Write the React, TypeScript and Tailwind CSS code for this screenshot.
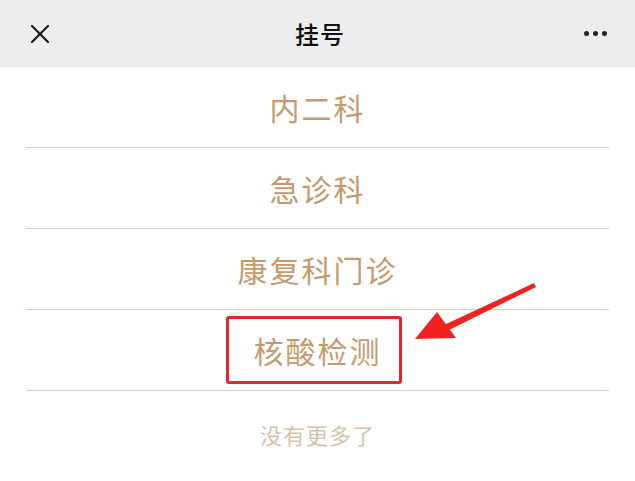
import { X } from "lucide-react";

const departments = ["内二科", "急诊科", "康复科门诊", "核酸检测"];

export default function App() {
  return (
    <div
      className="relative w-[635px] h-[481px] bg-white overflow-hidden"
      style={{ fontFamily: '"Noto Sans CJK SC", "Noto Sans", sans-serif' }}
    >
      <header className="h-[67px] bg-[#ededed] flex items-center justify-between px-[24px]">
        <X size={32} strokeWidth={1.6} className="text-[#1a1a1a]" />
        <h1 className="text-[24px] font-medium text-[#111] tracking-[1px]">挂号</h1>
        <div className="flex gap-[4px] pr-[4px]">
          <span className="block w-[5px] h-[5px] rounded-full bg-[#222]" />
          <span className="block w-[5px] h-[5px] rounded-full bg-[#222]" />
          <span className="block w-[5px] h-[5px] rounded-full bg-[#222]" />
        </div>
      </header>

      <ul className="mx-[26px]">
        {departments.map((name, i) => (
          <li
            key={name}
            className="h-[81px] flex items-center justify-center border-b border-[#dfcfbc]"
          >
            {i === 3 ? (
              <span className="w-[176px] h-[68px] mr-[8px] pl-[8px] flex items-center justify-center border-[3px] border-[#e7262b] rounded-[3px] text-[30px] text-[#c69a6c] tracking-[2px]">
                {name}
              </span>
            ) : (
              <span className="text-[30px] text-[#c69a6c] tracking-[2px]">{name}</span>
            )}
          </li>
        ))}
      </ul>

      <p className="text-center text-[22px] text-[#d6c2aa] mt-[27px] tracking-[1px]">没有更多了</p>

      {/* annotation arrow */}
      <svg
        className="absolute left-[410px] top-[278px]"
        width="130"
        height="66"
        viewBox="0 0 130 66"
      >
        <path d="M124 5 L34 47 L37 53 L126 9 Z" fill="#f0221f" />
        <path d="M5 61 L27 34 L46 60 Z" fill="#f0221f" />
      </svg>
    </div>
  );
}
